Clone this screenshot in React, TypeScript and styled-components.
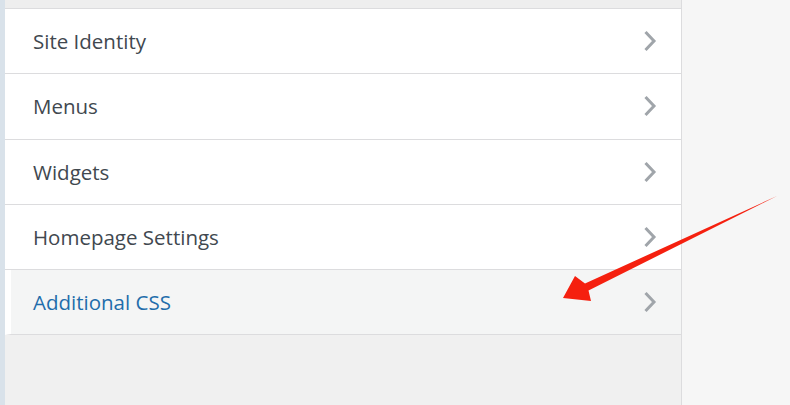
import React from "react";
import styled, { createGlobalStyle } from "styled-components";

const GlobalStyle = createGlobalStyle`
  html, body {
    margin: 0;
    padding: 0;
    background: #f5f5f5;
  }
  #root {
    height: 405px;
  }
`;

const sections = [
  "Site Identity",
  "Menus",
  "Widgets",
  "Homepage Settings",
  "Additional CSS",
];

const Chevron = () => (
  <svg width="14" height="22" viewBox="0 0 14 22">
    <path
      d="M2.5 2 L11 11 L2.5 20"
      fill="none"
      stroke="#a0a5aa"
      strokeWidth="3"
      strokeLinecap="butt"
    />
  </svg>
);

const App = () => {
  return (
    <>
      <GlobalStyle />
      <Page>
        <Strip />
        <Panel>
          <TopBand />
          {sections.map((title) => (
            <Row key={title} active={title === "Additional CSS"}>
              <Title active={title === "Additional CSS"}>{title}</Title>
              <Chevron />
            </Row>
          ))}
          <Filler />
        </Panel>
        <Preview />
        <Arrow width="790" height="405" viewBox="0 0 790 405">
          <polygon
            points="563,298 575,276 585,283.5 777,196 588.5,290.5 591,301"
            fill="#f5200f"
          />
        </Arrow>
      </Page>
    </>
  );
};

const Page = styled.div`
  position: relative;
  display: flex;
  width: 790px;
  height: 405px;
  overflow: hidden;
  font-family: "Open Sans", "Noto Sans", sans-serif;
`;

const Strip = styled.div`
  width: 5px;
  background: #d9e2ea;
`;

const Panel = styled.div`
  width: 676px;
  display: flex;
  flex-direction: column;
  background: #f0f0f1;
  border-right: 1px solid #dcdcde;
`;

const TopBand = styled.div`
  height: 8px;
  background: #eeeeee;
  border-bottom: 1px solid #dcdcde;
`;

const Row = styled.div<{ active?: boolean }>`
  height: 64.25px;
  flex-shrink: 0;
  display: flex;
  align-items: center;
  justify-content: space-between;
  padding: 0 24px 0 ${(p) => (p.active ? "22px" : "28px")};
  background: ${(p) => (p.active ? "#f4f5f5" : "#ffffff")};
  border-left: ${(p) => (p.active ? "6px solid #ffffff" : "0")};
  border-bottom: 1px solid #dcdcde;
`;

const Title = styled.span<{ active?: boolean }>`
  font-size: 20.5px;
  color: ${(p) => (p.active ? "#1f6dab" : "#41484f")};
`;

const Filler = styled.div`
  flex: 1;
  background: #f0f0f0;
`;

const Preview = styled.div`
  flex: 1;
  background: #f6f6f6;
`;

const Arrow = styled.svg`
  position: absolute;
  left: 0;
  top: 0;
  pointer-events: none;
`;

export default App;
